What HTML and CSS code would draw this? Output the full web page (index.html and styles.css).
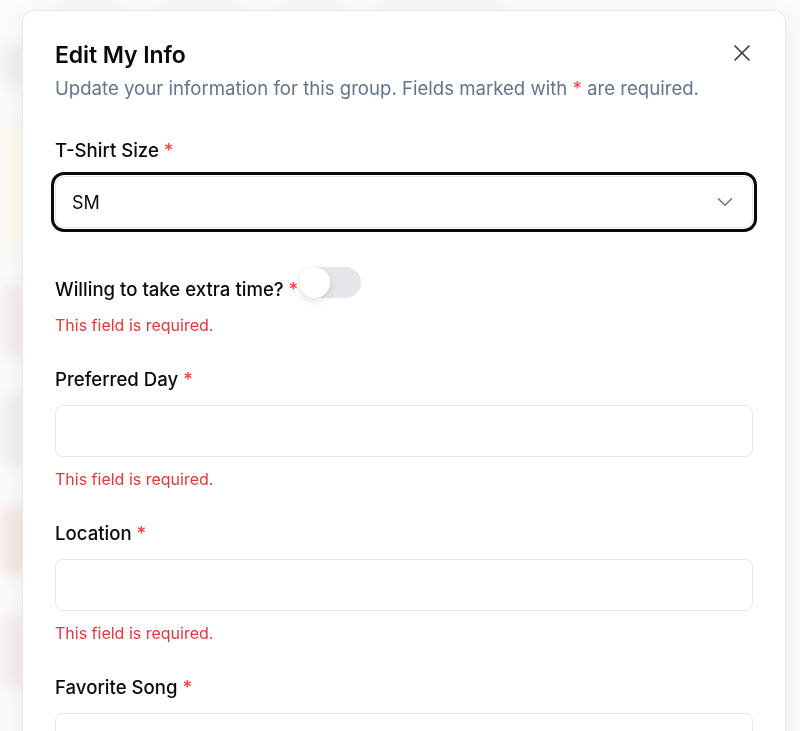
FILE: index.html
```html
<!DOCTYPE html>
<html lang="en">
  <head>
    <meta charset="UTF-8" />
    <meta name="viewport" content="width=device-width, initial-scale=1.0" />
    <title>Edit My Info</title>
    <link rel="stylesheet" href="styles.css">
  </head>
  <body>
    <div class="page">
      <div class="page-top">
        <span class="bar w60"></span>
        <span class="bar w80"></span>
        <span class="bar w60"></span>
        <span class="bar w120"></span>
      </div>
      <div class="page-side">
        <span class="blob gray"></span>
        <span class="blob yellow"></span>
        <span class="blob pink"></span>
        <span class="blob green"></span>
        <span class="blob red"></span>
        <span class="blob pink"></span>
      </div>
    </div>
    <div class="overlay"></div>

    <div class="modal">
      <button class="close" aria-label="Close">
        <svg width="28" height="28" viewBox="0 0 24 24" fill="none" stroke="currentColor" stroke-width="1.5" stroke-linecap="round">
          <path d="M18 6 6 18" />
          <path d="m6 6 12 12" />
        </svg>
      </button>
      <div class="modal-header">
        <h2>Edit My Info</h2>
        <p>Update your information for this group. Fields marked with <span class="req">*</span> are required.</p>
      </div>

      <form class="form">
        <div class="field">
          <label>T-Shirt Size <span class="req">*</span></label>
          <div class="select">
            <span>SM</span>
            <svg width="26" height="26" viewBox="0 0 24 24" fill="none" stroke="currentColor" stroke-width="1.4" stroke-linecap="round" stroke-linejoin="round">
              <path d="m6 9 6 6 6-6" />
            </svg>
          </div>
        </div>

        <div class="field toggle-field">
          <div class="toggle-row">
            <label>Willing to take extra time? <span class="req">*</span></label>
            <span class="switch"><span class="knob"></span></span>
          </div>
          <p class="error">This field is required.</p>
        </div>

        <div class="field">
          <label>Preferred Day <span class="req">*</span></label>
          <input class="input" type="text" />
          <p class="error">This field is required.</p>
        </div>

        <div class="field">
          <label>Location <span class="req">*</span></label>
          <input class="input" type="text" />
          <p class="error">This field is required.</p>
        </div>

        <div class="field">
          <label>Favorite Song <span class="req">*</span></label>
          <input class="input" type="text" />
        </div>
      </form>
    </div>
  </body>
</html>
```

FILE: styles.css
```css
* {
  box-sizing: border-box;
}
body {
  margin: 0;
  height: 731px;
  overflow: hidden;
  font-family: Inter, "Liberation Sans", sans-serif;
  background-color: #fafafa;
  color: #0a0a0a;
}

/* blurred page behind the dialog */
.page {
  position: fixed;
  inset: 0;
  filter: blur(6px);
}
.page-top {
  display: flex;
  gap: 40px;
  padding: 0 0 0 60px;
}
.bar {
  display: block;
  height: 6px;
  background-color: #e4e4e7;
  border-radius: 3px;
}
.w60 { width: 60px; }
.w80 { width: 80px; }
.w120 { width: 120px; }
.page-side {
  display: flex;
  flex-direction: column;
  gap: 40px;
  padding: 40px 0 0 0;
  width: 30px;
}
.blob {
  display: block;
  height: 70px;
  border-radius: 8px;
}
.blob.gray { background-color: #e8e8e8; height: 40px; }
.blob.yellow { background-color: #fdf7e6; height: 120px; }
.blob.pink { background-color: #f3e2e2; }
.blob.green { background-color: #e7eae4; }
.blob.red { background-color: #f1dcd7; }
.overlay {
  position: fixed;
  inset: 0;
  background-color: rgba(255, 255, 255, 0.4);
}

/* dialog */
.modal {
  position: absolute;
  left: 22px;
  top: 10px;
  width: 764px;
  height: 760px;
  padding: 30px 32px;
  background-color: #fff;
  border: 1px solid #e5e7eb;
  border-radius: 12px;
  box-shadow: 0 10px 30px rgba(0, 0, 0, 0.08);
}
.close {
  position: absolute;
  top: 28px;
  right: 29px;
  padding: 0;
  border: none;
  background: none;
  color: #3f3f46;
  display: flex;
}
.modal-header h2 {
  margin: 0;
  font-size: 23px;
  line-height: 28px;
  font-weight: 600;
  letter-spacing: -0.1px;
}
.modal-header p {
  margin: 7px 0 0;
  font-size: 18.6px;
  line-height: 24px;
  color: #64748b;
}
.req {
  color: #ef4444;
}

.form {
  display: flex;
  flex-direction: column;
  gap: 32px;
  margin-top: 38px;
}
.field {
  display: flex;
  flex-direction: column;
}
.field label {
  font-size: 18.6px;
  line-height: 24px;
  font-weight: 500;
}
.field > label {
  margin-bottom: 14px;
}
.select,
.input {
  height: 52px;
  width: 100%;
  border: 1px solid #e5e7eb;
  border-radius: 8px;
  background-color: #fff;
  font-family: inherit;
  font-size: 18px;
}
.select {
  display: flex;
  align-items: center;
  justify-content: space-between;
  padding: 0 14px 0 16px;
  box-shadow: 0 0 0 1px #fff, 0 0 0 4px #0a0a0a;
  border-radius: 9px;
}
.select svg {
  color: #737373;
}
.error {
  margin: 12px 0 0;
  font-size: 16px;
  line-height: 20px;
  color: #e0393e;
}

.toggle-field {
  margin-top: 7px;
}
.toggle-row {
  display: flex;
  align-items: center;
}
.toggle-row label {
  margin-right: 1px;
}
.toggle-row + .error {
  margin-top: 5px;
}
.switch {
  display: flex;
  width: 62px;
  height: 31px;
  margin-bottom: 12px;
  border-radius: 16px;
  background-color: #e5e7eb;
}
.knob {
  width: 31px;
  height: 31px;
  border-radius: 50%;
  background-color: #fff;
  box-shadow: 0 3px 8px rgba(0, 0, 0, 0.12);
}
```
